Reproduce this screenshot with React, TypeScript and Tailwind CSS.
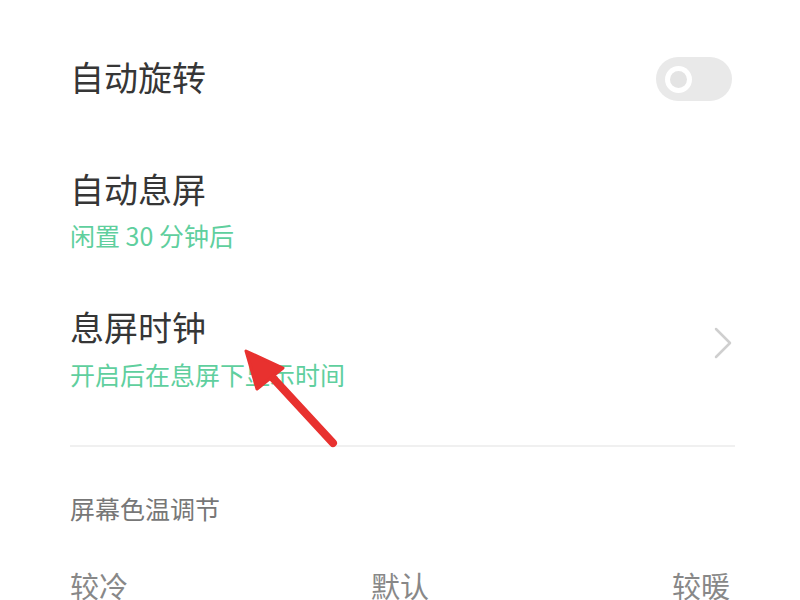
import React from "react";

const font = { fontFamily: '"Noto Sans CJK SC", "Noto Sans", sans-serif' };

export default function App() {
  return (
    <div className="relative w-[800px] h-[600px] overflow-hidden bg-white" style={font}>
      {/* 自动旋转 */}
      <div className="flex items-center justify-between pl-[70px] pr-[68px] pt-[53px]">
        <div className="text-[34px] leading-[40px] text-[#363636]">自动旋转</div>
        <div className="mt-[4px] flex h-[44px] w-[76px] items-center rounded-full bg-[#e9e9e9] pl-[9px]">
          <div className="flex h-[27px] w-[27px] items-center justify-center rounded-full bg-white">
            <div className="h-[17px] w-[17px] rounded-full bg-[#e4e4e4]" />
          </div>
        </div>
      </div>

      {/* 自动息屏 */}
      <div className="pl-[70px] pt-[68px]">
        <div className="text-[34px] leading-[40px] text-[#363636]">自动息屏</div>
        <div className="mt-[12px] text-[25px] leading-[29px] text-[#5fcf9e]">闲置 30 分钟后</div>
      </div>

      {/* 息屏时钟 */}
      <div className="flex items-center justify-between pl-[70px] pr-[67px] pt-[57px]">
        <div>
          <div className="text-[34px] leading-[40px] text-[#363636]">息屏时钟</div>
          <div className="mt-[13px] text-[25px] leading-[29px] text-[#5fcf9e]">开启后在息屏下显示时间</div>
        </div>
        <svg width="20" height="34" viewBox="0 0 20 34" className="mt-[-10px]">
          <path d="M3 3 L17 17 L3 31" fill="none" stroke="#cfcfcf" strokeWidth="2.5" strokeLinecap="round" strokeLinejoin="round" />
        </svg>
      </div>

      <div className="ml-[70px] mr-[65px] mt-[56px] h-[2px] bg-[#f0f0f0]" />

      <div className="pl-[70px] pt-[47px] text-[25px] leading-[29px] text-[#777777]">屏幕色温调节</div>

      <div className="flex justify-between px-[70px] pt-[45px] text-[29px] leading-[34px] text-[#888888]">
        <span>较冷</span>
        <span>默认</span>
        <span>较暖</span>
      </div>

      {/* red annotation arrow */}
      <svg className="absolute left-0 top-0 pointer-events-none" width="800" height="600" viewBox="0 0 800 600">
        <line x1="333" y1="443" x2="272" y2="377" stroke="#e8312f" strokeWidth="8" strokeLinecap="round" />
        <polygon points="246,351 257,389 283,368" fill="#e8312f" stroke="#e8312f" strokeWidth="3" strokeLinejoin="round" />
      </svg>
    </div>
  );
}
